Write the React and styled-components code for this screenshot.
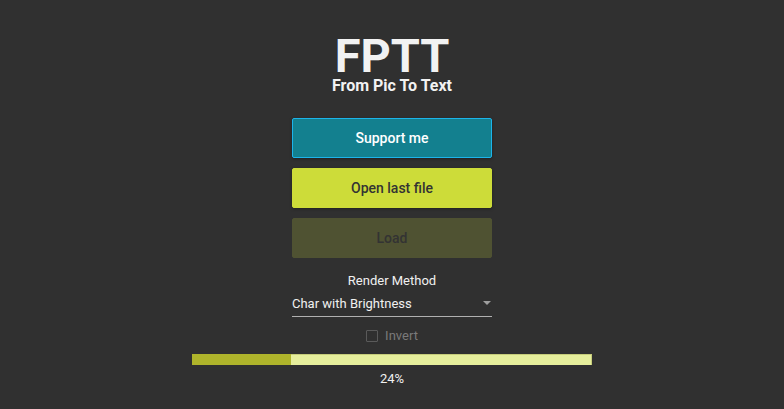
import React, { useState } from 'react';
import styled, { createGlobalStyle } from 'styled-components';

const GlobalStyle = createGlobalStyle`
  html, body {
    margin: 0;
    padding: 0;
    background: #303030;
    font-family: Roboto, "Noto Sans", Arial, sans-serif;
  }
`;

const Page = styled.div`
  width: 784px;
  height: 409px;
  display: flex;
  flex-direction: column;
  align-items: center;
  padding-top: 34px;
  box-sizing: border-box;
`;

const Title = styled.h1`
  margin: 0;
  font-size: 47px;
  font-weight: 700;
  line-height: 44px;
  color: #f2f2f2;
`;

const Subtitle = styled.div`
  font-size: 16px;
  font-weight: 700;
  line-height: 16px;
  color: #f2f2f2;
  margin-bottom: 24px;
`;

const Stack = styled.div`
  width: 200px;
  display: flex;
  flex-direction: column;
  gap: 10px;
`;

const Button = styled.button`
  height: 40px;
  width: 100%;
  border-radius: 2px;
  border: 1px solid ${(p) => p.$border || p.$bg};
  background: ${(p) => p.$bg};
  color: ${(p) => p.$color};
  font-family: inherit;
  font-size: 14px;
  font-weight: 500;
  cursor: ${(p) => (p.disabled ? 'default' : 'pointer')};
  box-shadow: ${(p) => (p.disabled ? 'none' : '0 1px 3px rgba(0,0,0,0.35)')};
`;

const Field = styled.div`
  width: 200px;
  margin-top: 15px;
  display: flex;
  flex-direction: column;
`;

const Label = styled.div`
  text-align: center;
  font-size: 13px;
  line-height: 16px;
  color: #f0f0f0;
  margin-bottom: 4px;
`;

const Select = styled.div`
  display: flex;
  align-items: center;
  justify-content: space-between;
  height: 20px;
  padding-bottom: 3px;
  border-bottom: 1px solid #b0b0b0;
  font-size: 13px;
  color: #f0f0f0;
`;

const Caret = styled.span`
  width: 0;
  height: 0;
  margin-right: 1px;
  border-left: 4px solid transparent;
  border-right: 4px solid transparent;
  border-top: 4px solid #9e9e9e;
`;

const CheckRow = styled.label`
  display: flex;
  align-items: center;
  justify-content: center;
  gap: 7px;
  margin-top: 11px;
  font-size: 13px;
  color: #7a7a7a;
`;

const Box = styled.span`
  width: 10px;
  height: 10px;
  border: 1px solid #5a5a5a;
  border-radius: 1px;
`;

const Track = styled.div`
  width: 400px;
  height: 11px;
  margin-top: 11px;
  display: flex;
  background: #e6ee9c;
  box-shadow: inset 0 1px 0 #c6cc7a, inset -1px 0 0 #c6cc7a;
`;

const Fill = styled.div`
  height: 100%;
  background: #afb42b;
`;

const Percent = styled.div`
  margin-top: 6px;
  font-size: 13px;
  color: #f0f0f0;
`;

export default function App() {
  const [progress] = useState(24);
  return (
    <>
      <GlobalStyle />
      <Page>
        <Title>FPTT</Title>
        <Subtitle>From Pic To Text</Subtitle>
        <Stack>
          <Button $bg="#13808f" $border="#1cb4ea" $color="#ffffff">Support me</Button>
          <Button $bg="#cddc39" $color="#333333">Open last file</Button>
          <Button $bg="#4f5232" $color="#333333" disabled>Load</Button>
        </Stack>
        <Field>
          <Label>Render Method</Label>
          <Select>
            <span>Char with Brightness</span>
            <Caret />
          </Select>
        </Field>
        <CheckRow>
          <Box />
          Invert
        </CheckRow>
        <Track>
          <Fill style={{ width: `${progress + 0.75}%` }} />
        </Track>
        <Percent>{progress}%</Percent>
      </Page>
    </>
  );
}
